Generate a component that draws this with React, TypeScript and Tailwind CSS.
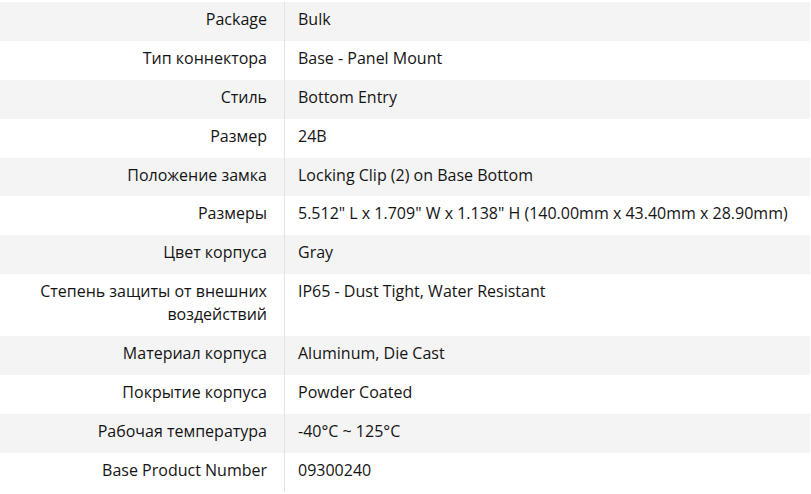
import React from "react";

const rows: [string, string][] = [
  ["Package", "Bulk"],
  ["Тип коннектора", "Base - Panel Mount"],
  ["Стиль", "Bottom Entry"],
  ["Размер", "24B"],
  ["Положение замка", "Locking Clip (2) on Base Bottom"],
  ["Размеры", '5.512" L x 1.709" W x 1.138" H (140.00mm x 43.40mm x 28.90mm)'],
  ["Цвет корпуса", "Gray"],
  ["Степень защиты от внешних воздействий", "IP65 - Dust Tight, Water Resistant"],
  ["Материал корпуса", "Aluminum, Die Cast"],
  ["Покрытие корпуса", "Powder Coated"],
  ["Рабочая температура", "-40°C ~ 125°C"],
  ["Base Product Number", "09300240"],
];

export default function App() {
  return (
    <div className="w-[811px] h-[494px] bg-white pt-[2px] text-[#141414]" style={{ fontFamily: '"Open Sans", "Noto Sans", sans-serif' }}>
      <div className="w-[810px] flex flex-col">
        {rows.map(([k, v], i) => (
          <div key={k} className={`flex text-[16px] leading-[23px] ${i % 2 === 0 ? "bg-[#f4f4f4]" : "bg-white"}`}>
            <div className="w-[285px] shrink-0 border-r border-[#e3e3e3] pl-[16px] pr-[17px] pt-[6px] pb-[9.9px] text-right">{k}</div>
            <div className="flex-1 pl-[13px] pr-[8px] pt-[6px] pb-[9.9px]">{v}</div>
          </div>
        ))}
      </div>
    </div>
  );
}
